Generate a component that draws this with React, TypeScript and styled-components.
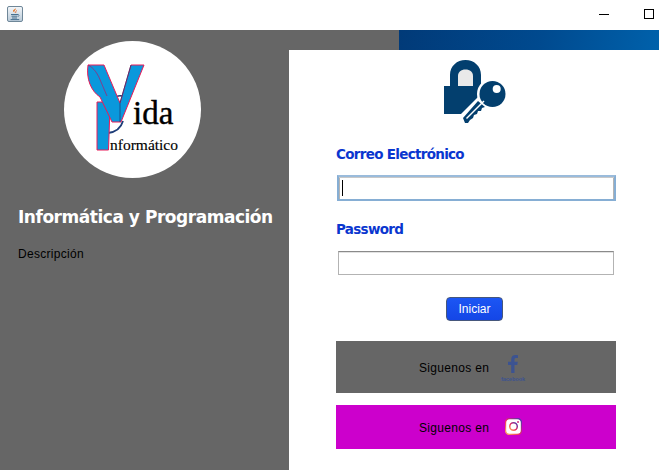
import React from "react";
import styled, { createGlobalStyle } from "styled-components";

const Global = createGlobalStyle`
  html, body { margin: 0; padding: 0; background: #fff; }
  body { font-family: "Liberation Sans", Arial, sans-serif; }
  * { box-sizing: border-box; }
`;

const Window = styled.div`
  width: 659px;
  height: 470px;
  display: flex;
  flex-direction: column;
  overflow: hidden;
  background: #fff;
`;

const TitleBar = styled.div`
  height: 30px;
  flex: none;
  display: flex;
  align-items: flex-start;
  background: #fff;
  padding: 6px 0 0 7px;
`;

const AppIcon = styled.svg`
  width: 16px;
  height: 16px;
  display: block;
`;

const WindowControls = styled.div`
  margin-left: auto;
  display: flex;
  align-items: center;
  height: 14px;
  margin-top: 1px;
  padding-right: 5px;
  gap: 35px;
`;

const MinimizeGlyph = styled.span`
  width: 10px;
  height: 1px;
  background: #000;
`;

const MaximizeGlyph = styled.span`
  width: 10px;
  height: 10px;
  border: 1px solid #000;
`;

const Body = styled.div`
  flex: 1;
  display: flex;
  min-height: 0;
`;

const Sidebar = styled.aside`
  width: 289px;
  flex: none;
  background: #666;
  padding: 11px 0 0 18px;
`;

const LogoDisc = styled.div`
  width: 137px;
  height: 137px;
  margin-left: 46px;
  border-radius: 50%;
  background: #fff;
  overflow: hidden;
`;

const LogoArt = styled.svg`
  width: 137px;
  height: 137px;
  display: block;
`;

const Heading = styled.h1`
  margin: 29px 0 0;
  font: bold 17px/20px "DejaVu Sans", Verdana, sans-serif;
  letter-spacing: -0.47px;
  color: #fff;
  white-space: nowrap;
`;

const Description = styled.p`
  margin: 20px 0 0;
  font: 12px/14px "Liberation Sans", Arial, sans-serif;
  letter-spacing: 0.3px;
  color: #000;
`;

const Main = styled.div`
  flex: 1;
  display: flex;
  flex-direction: column;
  min-width: 0;
`;

const Strip = styled.div`
  height: 20px;
  flex: none;
  display: flex;
`;

const StripGray = styled.div`
  width: 110px;
  background: #666;
`;

const StripBlue = styled.div`
  flex: 1;
  background: linear-gradient(100deg, #013a78 0%, #004a8f 55%, #0061ab 100%);
`;

const FormPanel = styled.main`
  flex: 1;
  background: #fff;
  padding: 10px 0 0 47px;
  display: flex;
  flex-direction: column;
  align-items: flex-start;
`;

const LockIcon = styled.svg`
  width: 64px;
  height: 64px;
  margin-left: 108px;
  display: block;
  flex: none;
`;

const FieldLabel = styled.label<{ $gap: number }>`
  margin-top: ${(p) => p.$gap}px;
  font: bold 13.5px/17px "DejaVu Sans", Verdana, sans-serif;
  letter-spacing: -0.7px;
  color: #0a36cf;
`;

const EmailBox = styled.div`
  width: 279px;
  height: 26px;
  margin: 12px 0 0 1px;
  background: #fff;
  border: 2px solid #86aed4;
  border-top-color: #9abbdb;
  box-shadow: inset 0 1px 0 #c8c8c8, inset 1px 0 0 #b4b4b4, inset -1px 0 0 #b4b4b4;
  padding: 3px 0 0 3px;
`;

const Caret = styled.span`
  display: block;
  width: 1px;
  height: 16px;
  background: #000;
`;

const PasswordBox = styled.div`
  width: 276px;
  height: 24px;
  margin: 13px 0 0 2px;
  background: #fff;
  border: 1px solid #b3b3b3;
  border-top-color: #8a8a8a;
  box-shadow: inset 0 1px 0 #e2e2e2;
`;

const StartButton = styled.button`
  width: 57px;
  height: 24px;
  margin: 22px 0 0 110px;
  padding: 0;
  border: 1px solid #46577c;
  border-radius: 4px;
  background: linear-gradient(#1c56f4, #1446e6);
  color: #fff;
  font: 12px/20px "Liberation Sans", Arial, sans-serif;
`;

const SocialBar = styled.div<{ $bg: string; $height: number; $gap: number }>`
  width: 280px;
  height: ${(p) => p.$height}px;
  margin-top: ${(p) => p.$gap}px;
  flex: none;
  background: ${(p) => p.$bg};
  display: flex;
  align-items: center;
  padding-left: 83px;
`;

const SocialText = styled.span`
  width: 83px;
  flex: none;
  margin-top: 2px;
  font: 12px/14px "Liberation Sans", Arial, sans-serif;
  letter-spacing: 0.32px;
  color: #000;
`;

const FacebookMark = styled.div`
  width: 22px;
  margin-top: 2px;
  display: flex;
  flex-direction: column;
  align-items: center;
`;

const FacebookGlyph = styled.svg`
  width: 10px;
  height: 18px;
  display: block;
`;

const FacebookWord = styled.span`
  margin-top: 3px;
  font: bold 5.5px/6px "Liberation Sans", Arial, sans-serif;
  color: #3c5391;
`;

const InstagramIcon = styled.svg`
  width: 17px;
  height: 17px;
  margin: -1px 0 0 3px;
  display: block;
`;

export default function App() {
  return (
    <Window>
      <Global />
      <TitleBar>
        <AppIcon viewBox="0 0 16 16">
          <defs>
            <linearGradient id="javaBg" x1="0" y1="0" x2="0" y2="1">
              <stop offset="0" stopColor="#f4f7fa" />
              <stop offset="1" stopColor="#b9cad8" />
            </linearGradient>
          </defs>
          <rect x="0.5" y="0.5" width="15" height="15" rx="1.5" fill="url(#javaBg)" stroke="#6f8798" />
          <path d="M8.6 2.2c.9 1.4-2 2.4-1.2 4 .2.4.5.7.8.9-1.6-.8-2.6-1.8-1.8-3 .6-.8 1.9-1 2.2-1.9z" fill="#e8701a" />
          <path d="M10 4.5c-1 .6-1.8 1-1.2 2.5" fill="none" stroke="#d9601a" strokeWidth="0.8" />
          <path d="M4 8.5h7M4.5 10.2h6M5 12h5M3.6 13.6h8.6" stroke="#47708f" strokeWidth="1" fill="none" />
          <path d="M11 8.6c1.4-.2 1.6 1.4 0 1.8" stroke="#47708f" strokeWidth="0.8" fill="none" />
        </AppIcon>
        <WindowControls>
          <MinimizeGlyph />
          <MaximizeGlyph />
        </WindowControls>
      </TitleBar>
      <Body>
        <Sidebar>
          <LogoDisc>
            <LogoArt viewBox="0 0 137 137">
              <path
                d="M45 63C49 56 55 53 61 56M44 92C52 91 57 87 59 80"
                fill="none"
                stroke="#1d3d78"
                strokeWidth="1.800"
              />
              <path
                d="M33 61H48L46 66 44.500 109H33z"
                fill="#0a98dc"
                stroke="#ea1a58"
                strokeWidth="1"
                strokeLinejoin="round"
              />
              <path
                d="M24 24H40L56 62 67 24H80L57 81H48L36 56C27 50 22 38 24 24z"
                fill="#0a98dc"
                stroke="#ea1a58"
                strokeWidth="1"
                strokeLinejoin="round"
              />
              <path d="M24 24C30 27 34 33 37 41L43 55" fill="none" stroke="#b01a6c" strokeWidth="0.700" />
              <path d="M67 24L56 62 56 81" fill="none" stroke="#1d3d78" strokeWidth="0.800" />
              <text x="69" y="83" fontFamily="'Liberation Serif', serif" fontSize="33" fill="#000" stroke="#000" strokeWidth="0.400">
                ida
              </text>
              <text x="46" y="109" fontFamily="'Liberation Serif', serif" fontSize="15.500" fill="#000" stroke="#000" strokeWidth="0.150">
                nformático
              </text>
            </LogoArt>
          </LogoDisc>
          <Heading>Informática y Programación</Heading>
          <Description>Descripción</Description>
        </Sidebar>
        <Main>
          <Strip>
            <StripGray />
            <StripBlue />
          </Strip>
          <FormPanel>
            <LockIcon viewBox="0 0 64 64">
              <path
                d="M0 26H6V15C6 6 13 0 21.500 0S37 6 37 15V26H42V54H0z"
                fill="#033f6e"
              />
              <path d="M14 26V16C14 12 17 9.500 21.500 9.500S29 12 29 16V26z" fill="#e9e9e9" />
              <path d="M16 55L34 37H52V64H16z" fill="#fff" />
              <circle cx="48.500" cy="34" r="15.500" fill="#fff" />
              <circle cx="48.500" cy="34" r="13" fill="#033f6e" />
              <circle cx="52.700" cy="29" r="4" fill="#fff" />
              <path
                d="M19 58L34 41 41 47 38 48 37 51 34 51 33 54 30 55 29 58 26 60 24 63 21 63z"
                fill="#033f6e"
              />
              <path d="M22.500 58.500L40 41" stroke="#fff" strokeWidth="1.400" />
            </LockIcon>
            <FieldLabel $gap={22}>Correo Electrónico</FieldLabel>
            <EmailBox>
              <Caret />
            </EmailBox>
            <FieldLabel $gap={20}>Password</FieldLabel>
            <PasswordBox />
            <StartButton>Iniciar</StartButton>
            <SocialBar $bg="#666" $height={52} $gap={20}>
              <SocialText>Siguenos en</SocialText>
              <FacebookMark>
                <FacebookGlyph viewBox="0 0 10 18">
                  <path
                    d="M6.500 18V10h2.800l.5-3.300H6.500V4.700c0-1 .4-1.600 1.700-1.600H10V.2C9.600.1 8.600 0 7.500 0 5 0 3.200 1.500 3.200 4.300v2.400H0V10h3.200v8z"
                    fill="#3c5391"
                  />
                </FacebookGlyph>
                <FacebookWord>facebook</FacebookWord>
              </FacebookMark>
            </SocialBar>
            <SocialBar $bg="#cc00cc" $height={44} $gap={12}>
              <SocialText>Siguenos en</SocialText>
              <InstagramIcon viewBox="0 0 18 18">
                <defs>
                  <linearGradient id="igGrad" x1="0" y1="1" x2="1" y2="0">
                    <stop offset="0" stopColor="#fdb95a" />
                    <stop offset="0.45" stopColor="#ee2a5f" />
                    <stop offset="1" stopColor="#3f37b6" />
                  </linearGradient>
                </defs>
                <rect x="0.500" y="0.500" width="17" height="17" rx="4.500" fill="#fff" stroke="url(#igGrad)" strokeWidth="1.500" />
                <circle cx="9" cy="9" r="4" fill="none" stroke="url(#igGrad)" strokeWidth="1.600" />
                <circle cx="13.800" cy="4.200" r="1" fill="#d42a7a" />
              </InstagramIcon>
            </SocialBar>
          </FormPanel>
        </Main>
      </Body>
    </Window>
  );
}
